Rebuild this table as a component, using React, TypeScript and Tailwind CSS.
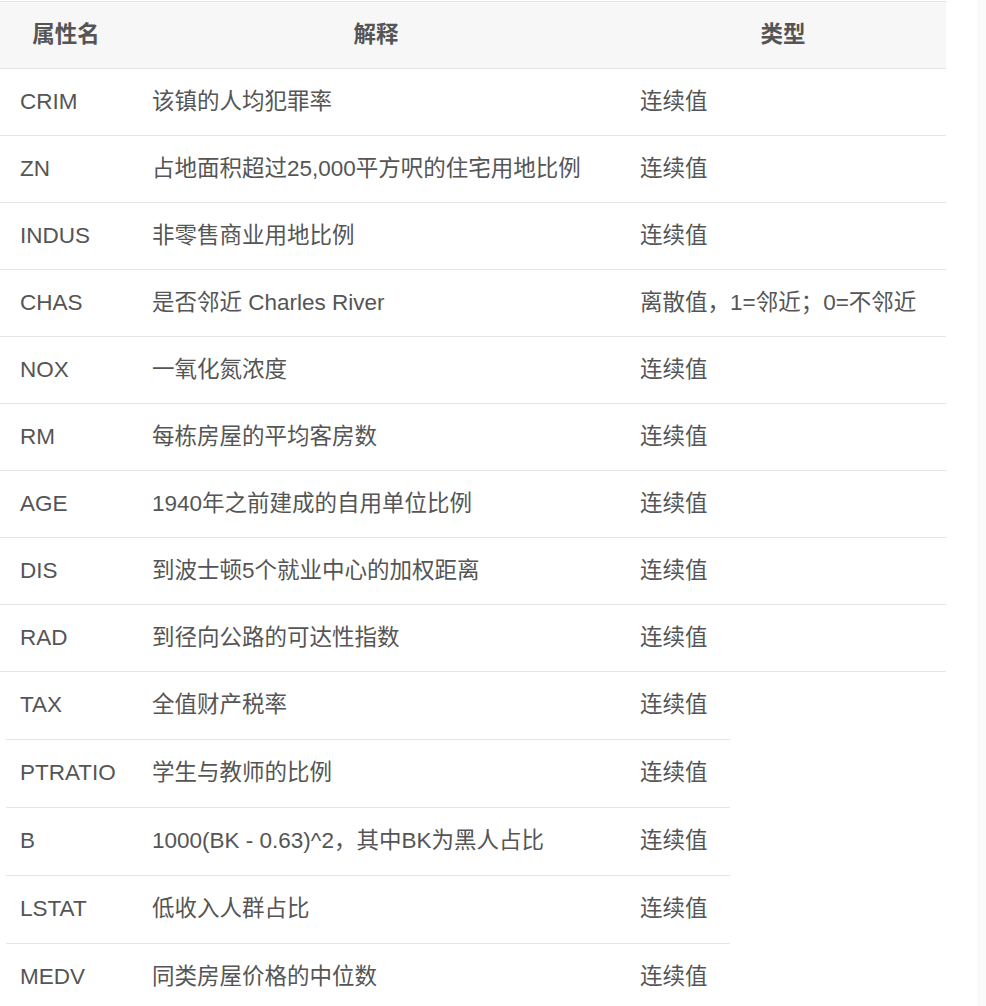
const topRows = [
  { name: "CRIM", desc: "该镇的人均犯罪率", type: "连续值" },
  { name: "ZN", desc: "占地面积超过25,000平方呎的住宅用地比例", type: "连续值" },
  { name: "INDUS", desc: "非零售商业用地比例", type: "连续值" },
  { name: "CHAS", desc: "是否邻近 Charles River", type: "离散值，1=邻近；0=不邻近" },
  { name: "NOX", desc: "一氧化氮浓度", type: "连续值" },
  { name: "RM", desc: "每栋房屋的平均客房数", type: "连续值" },
  { name: "AGE", desc: "1940年之前建成的自用单位比例", type: "连续值" },
  { name: "DIS", desc: "到波士顿5个就业中心的加权距离", type: "连续值" },
  { name: "RAD", desc: "到径向公路的可达性指数", type: "连续值" },
];

const bottomRows = [
  { name: "TAX", desc: "全值财产税率", type: "连续值" },
  { name: "PTRATIO", desc: "学生与教师的比例", type: "连续值" },
  { name: "B", desc: "1000(BK - 0.63)^2，其中BK为黑人占比", type: "连续值" },
  { name: "LSTAT", desc: "低收入人群占比", type: "连续值" },
  { name: "MEDV", desc: "同类房屋价格的中位数", type: "连续值" },
];

const font = {
  fontFamily: '"Liberation Sans", "Noto Sans CJK SC", sans-serif',
};

export default function App() {
  return (
    <div className="flex min-h-[1006px] bg-white text-[#555] text-[22.5px] leading-none" style={font}>
      <div className="w-[977px] pt-px">
        {/* first table */}
        <div className="w-[946px]">
          <div className="grid grid-cols-[132px_488px_326px] h-[68px] border-y border-[#e3e5e9] bg-[#f7f7f7] font-bold items-center">
            <div className="text-center">属性名</div>
            <div className="text-center">解释</div>
            <div className="text-center">类型</div>
          </div>
          {topRows.map((r) => (
            <div
              key={r.name}
              className="grid grid-cols-[132px_488px_326px] h-[67px] border-b border-[#e3e5e9] items-center"
            >
              <div className="pl-5">{r.name}</div>
              <div className="pl-5 whitespace-nowrap">{r.desc}</div>
              <div className="pl-5 whitespace-nowrap">{r.type}</div>
            </div>
          ))}
        </div>

        {/* second table, pasted below */}
        <div className="ml-[6px] w-[724px] -mt-px">
          {bottomRows.map((r) => (
            <div
              key={r.name}
              className="grid grid-cols-[126px_488px_110px] h-[68px] border-t border-[#e3e5e9] items-center"
            >
              <div className="pl-[14px]">{r.name}</div>
              <div className="pl-5 whitespace-nowrap">{r.desc}</div>
              <div className="pl-5 whitespace-nowrap">{r.type}</div>
            </div>
          ))}
        </div>
      </div>
      <div className="flex-1 bg-[#fafafa]" />
    </div>
  );
}
